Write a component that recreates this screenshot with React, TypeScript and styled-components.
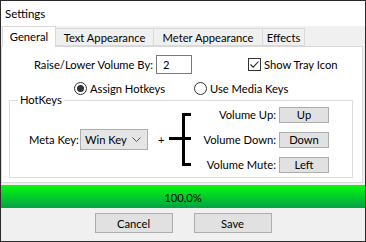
import React from "react";
import styled, { createGlobalStyle } from "styled-components";

const Global = createGlobalStyle`
  html, body { margin: 0; padding: 0; background: #f0f0f0; }
  body { font-family: Lato, "Noto Sans", sans-serif; font-size: 11.2px; color: #000; }
  * { box-sizing: border-box; }
`;

const Window = styled.div`
  width: 366px;
  height: 242px;
  border: 1px solid #2b2b2b;
  background: #f0f0f0;
  display: flex;
  flex-direction: column;
  overflow: hidden;
`;

const TitleBar = styled.div`
  height: 25px;
  background: #fff;
  display: flex;
  align-items: center;
  padding-left: 4px;
  font-size: 11.5px;
  flex-shrink: 0;
`;

const TabStrip = styled.div`
  height: 20px;
  display: flex;
  align-items: flex-end;
  padding-left: 1px;
  position: relative;
  z-index: 1;
  flex-shrink: 0;
`;

const Tab = styled.div<{ $active?: boolean; $width: number }>`
  width: ${(p) => p.$width}px;
  height: ${(p) => (p.$active ? 21 : 18)}px;
  margin-bottom: ${(p) => (p.$active ? -1 : 0)}px;
  margin-left: -1px;
  &:first-child { margin-left: 0; }
  border: 1px solid #d9d9d9;
  border-bottom: ${(p) => (p.$active ? "none" : "1px solid #d9d9d9")};
  background: ${(p) => (p.$active ? "#fff" : "#f0f0f0")};
  position: relative;
  z-index: ${(p) => (p.$active ? 2 : 1)};
  display: flex;
  align-items: center;
  justify-content: center;
  padding-bottom: ${(p) => (p.$active ? 1 : 0)}px;
  white-space: nowrap;
`;

const Panel = styled.div`
  height: 137px;
  margin-right: 2px;
  background: #fff;
  border: 1px solid #d9d9d9;
  display: flex;
  flex-direction: column;
  flex-shrink: 0;
`;

const Row = styled.div<{ $top: number; $height: number }>`
  margin-top: ${(p) => p.$top}px;
  height: ${(p) => p.$height}px;
  display: flex;
  align-items: center;
  white-space: nowrap;
`;

const Label = styled.span<{ $width: number; $align?: string }>`
  width: ${(p) => p.$width}px;
  text-align: ${(p) => p.$align || "left"};
  flex-shrink: 0;
  white-space: nowrap;
`;

const TextBox = styled.div`
  margin-left: 3px;
  width: 36px;
  height: 19px;
  border: 1px solid #7a7a7a;
  background: #fff;
  display: flex;
  align-items: center;
  padding-left: 6px;
`;

const CheckOption = styled.label`
  margin-left: 56px;
  display: flex;
  align-items: center;
  gap: 3px;
`;

const CheckBox = styled.span`
  width: 13px;
  height: 13px;
  border: 1px solid #333;
  background: #fff;
  display: flex;
  align-items: center;
  justify-content: center;
`;

const RadioOption = styled.label<{ $left: number; $width?: number }>`
  margin-left: ${(p) => p.$left}px;
  width: ${(p) => (p.$width ? `${p.$width}px` : "auto")};
  display: flex;
  align-items: center;
  gap: 3px;
  flex-shrink: 0;
`;

const Radio = styled.span<{ $checked?: boolean }>`
  width: 13px;
  height: 13px;
  border-radius: 50%;
  border: 1px solid #333;
  background: #fff;
  display: flex;
  align-items: center;
  justify-content: center;
  &::after {
    content: "";
    width: 7px;
    height: 7px;
    border-radius: 50%;
    background: ${(p) => (p.$checked ? "#333" : "transparent")};
  }
`;

const GroupBox = styled.div`
  margin-top: 4px;
  margin-left: 7px;
  width: 344px;
  height: 78px;
  border: 1px solid #dcdcdc;
  position: relative;
  display: flex;
  align-items: center;
  padding-left: 19px;
  padding-top: 1px;
`;

const Caption = styled.span`
  position: absolute;
  top: -9px;
  left: 8px;
  padding: 0 2px;
  background: #fff;
  line-height: 16px;
`;

const Combo = styled.div`
  margin-left: 2px;
  width: 68px;
  height: 21px;
  background: #e5e5e5;
  border: 1px solid #adadad;
  display: flex;
  align-items: center;
  justify-content: space-between;
  padding: 0 6px 0 4px;
`;

const Plus = styled.span`
  margin-left: 10px;
  width: 6px;
`;

const Bracket = styled.svg`
  margin-left: 5px;
  flex-shrink: 0;
`;

const KeyGrid = styled.div`
  margin-left: 7px;
  display: grid;
  grid-template-columns: 78px 50px;
  column-gap: 3px;
  row-gap: 9px;
  align-items: center;
`;

const KeyLabel = styled.span`
  text-align: right;
  white-space: nowrap;
`;

const KeyButton = styled.div`
  height: 16px;
  background: #e1e1e1;
  border: 1px solid #adadad;
  display: flex;
  align-items: center;
  justify-content: center;
`;

const Progress = styled.div`
  margin-top: 2px;
  height: 23px;
  background: linear-gradient(#05f90e, #02a246);
  display: flex;
  align-items: center;
  justify-content: center;
  padding-top: 2px;
  flex-shrink: 0;
`;

const Footer = styled.div`
  display: flex;
  justify-content: center;
  gap: 21px;
  padding-top: 5px;
`;

const Button = styled.div`
  width: 78px;
  height: 20px;
  background: #e1e1e1;
  border: 1px solid #adadad;
  display: flex;
  align-items: center;
  justify-content: center;
`;

export default function App() {
  return (
    <>
      <Global />
      <Window>
        <TitleBar>Settings</TitleBar>
        <TabStrip>
          <Tab $active $width={54}>General</Tab>
          <Tab $width={99}>Text Appearance</Tab>
          <Tab $width={110}>Meter Appearance</Tab>
          <Tab $width={43}>Effects</Tab>
        </TabStrip>
        <Panel>
          <Row $top={8} $height={19}>
            <Label $width={151} $align="right">Raise/Lower Volume By:</Label>
            <TextBox>2</TextBox>
            <CheckOption>
              <CheckBox>
                <svg width="11" height="11" viewBox="0 0 11 11">
                  <path d="M1.5 5.5 L4.2 8.2 L9.5 2.5" fill="none" stroke="#222" strokeWidth="1.1" />
                </svg>
              </CheckBox>
              Show Tray Icon
            </CheckOption>
          </Row>
          <Row $top={6} $height={16}>
            <RadioOption $left={72} $width={120}>
              <Radio $checked />
              Assign Hotkeys
            </RadioOption>
            <RadioOption $left={0}>
              <Radio />
              Use Media Keys
            </RadioOption>
          </Row>
          <GroupBox>
            <Caption>HotKeys</Caption>
            <Label $width={49}>Meta Key:</Label>
            <Combo>
              <span>Win Key</span>
              <svg width="9" height="5" viewBox="0 0 9 5">
                <path d="M0.5 0.5 L4.5 4.5 L8.5 0.5" fill="none" stroke="#555" strokeWidth="1" />
              </svg>
            </Combo>
            <Plus>+</Plus>
            <Bracket width="22" height="53" viewBox="0 0 22 53">
              <rect x="13" y="0" width="3" height="53" fill="#000" />
              <rect x="13" y="0" width="9" height="3" fill="#000" />
              <rect x="13" y="50" width="9" height="3" fill="#000" />
              <rect x="0" y="24" width="22" height="3" fill="#000" />
            </Bracket>
            <KeyGrid>
              <KeyLabel>Volume Up:</KeyLabel>
              <KeyButton>Up</KeyButton>
              <KeyLabel>Volume Down:</KeyLabel>
              <KeyButton>Down</KeyButton>
              <KeyLabel>Volume Mute:</KeyLabel>
              <KeyButton>Left</KeyButton>
            </KeyGrid>
          </GroupBox>
        </Panel>
        <Progress>100,0%</Progress>
        <Footer>
          <Button>Cancel</Button>
          <Button>Save</Button>
        </Footer>
      </Window>
    </>
  );
}
